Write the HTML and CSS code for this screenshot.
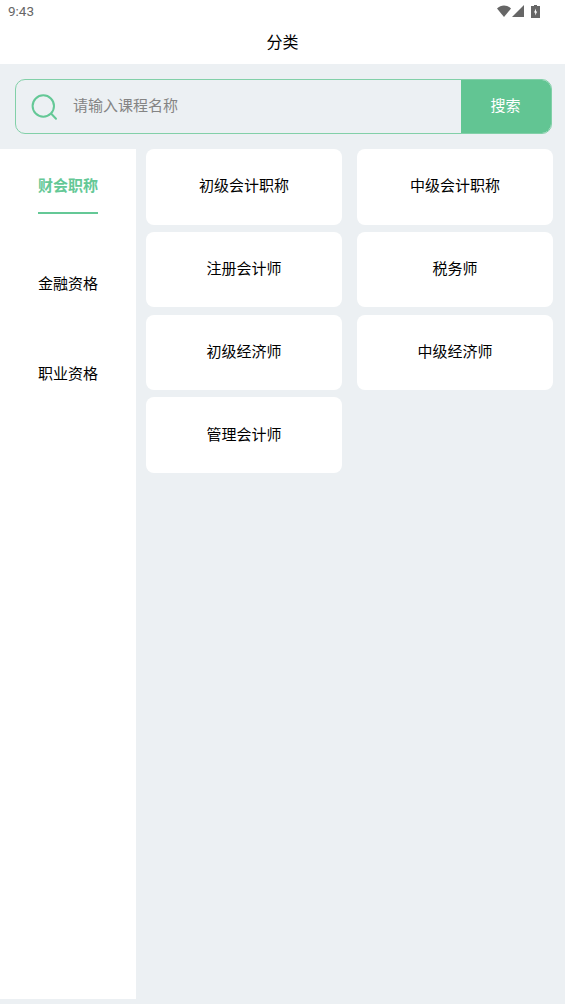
FILE: index.html
```html
<!DOCTYPE html>
<html lang="zh">
<head>
    <meta charset="utf-8">
    <title>分类</title>
    <link rel="stylesheet" href="styles.css">
</head>
<body>
<header class="top-bar">
    <div class="status-bar">
        <span class="status-time">9:43</span>
        <div class="status-icons">
            <svg class="icon-wifi" width="14" height="12" viewBox="0 0 14 12"><path d="M0 3.500C4 -0.600 10 -0.600 14 3.500L7 12Z" fill="#666"/></svg>
            <svg class="icon-signal" width="12" height="12" viewBox="0 0 12 12"><path d="M12 0V12H0Z" fill="#666"/></svg>
            <svg class="icon-battery" width="9" height="13" viewBox="0 0 9 13"><path d="M3 0H6V1H9V13H0V1H3Z" fill="#666"/><path d="M5 3.500L3 7.500H4.200V10.500L6.200 6.500H5Z" fill="#fff"/></svg>
        </div>
    </div>
    <h1 class="page-title">分类</h1>
</header>

<main class="content">
    <form class="search-box">
        <div class="search-field">
            <svg class="icon-search" width="28" height="28" viewBox="0 0 28 28" fill="none" stroke="#64c896"><circle cx="12.300" cy="13" r="10.700" stroke-width="2"/><path d="M20.500 21L25 25.700" stroke-width="2" stroke-linecap="round"/></svg>
            <span class="search-placeholder">请输入课程名称</span>
        </div>
        <div class="search-button">搜索</div>
    </form>

    <div class="columns">
        <nav class="side-nav">
            <a class="side-item side-item-active"><span class="side-label">财会职称</span></a>
            <a class="side-item"><span class="side-label">金融资格</span></a>
            <a class="side-item"><span class="side-label">职业资格</span></a>
        </nav>
        <section class="course-grid">
            <div class="course-card">初级会计职称</div>
            <div class="course-card">中级会计职称</div>
            <div class="course-card">注册会计师</div>
            <div class="course-card">税务师</div>
            <div class="course-card">初级经济师</div>
            <div class="course-card">中级经济师</div>
            <div class="course-card">管理会计师</div>
        </section>
    </div>
</main>
</body>
</html>
```

FILE: styles.css
```css
* {
    box-sizing: border-box;
}

html, body {
    height: 100%;
}

body {
    margin: 0;
    background-color: #ecf0f3;
    color: #000;
    font-family: "Roboto", "Noto Sans CJK SC", sans-serif;
    font-size: 15px;
    overflow: hidden;
}

/* Status bar and title */
.top-bar {
    height: 64px;
    background-color: #fff;
}

.status-bar {
    display: flex;
    align-items: center;
    justify-content: space-between;
    height: 24px;
    padding: 0 25px 2px 8px;
}

.status-time {
    color: #666;
    font-size: 13.500px;
}

.status-icons {
    display: flex;
    align-items: center;
    gap: 1px;
}

.icon-battery {
    margin-left: 6px;
}

.page-title {
    margin: 0;
    padding-top: 9px;
    font-size: 16px;
    font-weight: 400;
    line-height: 20px;
    text-align: center;
}

/* Search */
.content {
    padding-top: 15px;
}

.search-box {
    display: flex;
    height: 55px;
    margin: 0 13px 15px 15px;
    border: 1px solid #82d0a8;
    border-radius: 10px;
    overflow: hidden;
}

.search-field {
    display: flex;
    flex: 1;
    align-items: center;
    gap: 14px;
    padding-left: 15px;
}

.search-placeholder {
    padding-bottom: 4px;
    color: #848484;
    font-size: 15px;
}

.search-button {
    display: flex;
    align-items: center;
    justify-content: center;
    width: 91px;
    margin: -1px -1px -1px 0;
    padding: 0 2px 4px 0;
    background-color: #62c593;
    color: #fff;
    font-size: 15px;
}

/* Sidebar and cards */
.columns {
    display: flex;
    gap: 10px;
    height: 850px;
}

.side-nav {
    width: 136px;
    padding-top: 17px;
    background-color: #fff;
}

.side-item {
    display: flex;
    justify-content: center;
    height: 90px;
}

.side-item:first-child {
    height: 98px;
}

.side-label {
    height: 48px;
    padding-top: 10px;
    line-height: 20px;
}

.side-item-active .side-label {
    color: #64c896;
    font-weight: 700;
    border-bottom: 2px solid #64c896;
}

.course-grid {
    display: grid;
    grid-template-columns: 196px 196px;
    grid-auto-rows: 75.500px;
    column-gap: 15px;
    row-gap: 7.300px;
    align-content: start;
}

.course-card {
    display: flex;
    align-items: center;
    justify-content: center;
    padding-bottom: 4px;
    background-color: #fff;
    border-radius: 8px;
}
```
